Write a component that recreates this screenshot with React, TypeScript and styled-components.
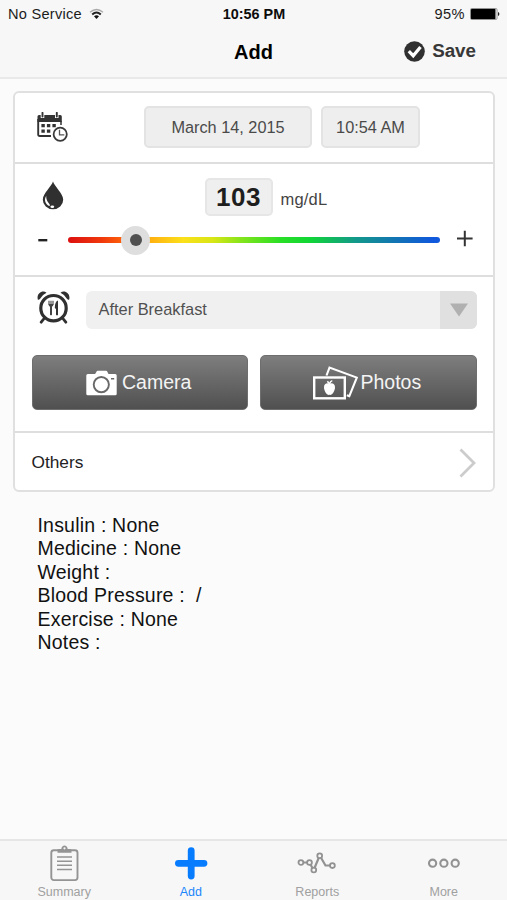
import React from 'react';
import styled, { createGlobalStyle } from 'styled-components';

const GlobalStyle = createGlobalStyle`
  * { box-sizing: border-box; }
  body {
    margin: 0;
    background: #fbfbfb;
    font-family: "Liberation Sans", Arial, Helvetica, sans-serif;
    color: #1c1c1c;
  }
  button { font-family: inherit; }
  svg { display: block; flex: none; }
`;

const Screen = styled.div`
  width: 507px;
  height: 900px;
  display: flex;
  flex-direction: column;
  overflow: hidden;
`;

const Header = styled.header`
  height: 79px;
  flex: none;
  background: #f7f7f7;
  border-bottom: 2px solid #e9e9e9;
`;

const StatusBar = styled.div`
  display: grid;
  grid-template-columns: 1fr auto 1fr;
  height: 28px;
  padding: 0 7px 0 8px;
  font-size: 14.6px;
  line-height: 28px;
`;

const StatusGroup = styled.div<{ $end?: boolean }>`
  display: flex;
  align-items: center;
  gap: ${(p) => (p.$end ? 5 : 7)}px;
  justify-content: ${(p) => (p.$end ? 'flex-end' : 'flex-start')};
  letter-spacing: ${(p) => (p.$end ? '0.4px' : '0.25px')};
`;

const Clock = styled.div`
  font-size: 14.4px;
  font-weight: 700;
  color: #0c0c0c;
`;

const TitleBar = styled.div`
  display: grid;
  grid-template-columns: 1fr auto 1fr;
  height: 49px;
`;

const Title = styled.h1`
  grid-column: 2;
  margin: 0;
  font-size: 20px;
  line-height: 49px;
  font-weight: 700;
  color: #000;
`;

const SaveButton = styled.button`
  grid-column: 3;
  justify-self: end;
  display: flex;
  align-items: center;
  gap: 7px;
  height: 46px;
  padding: 0 31px 0 0;
  border: 0;
  background: none;
  font-size: 18.8px;
  font-weight: 700;
  color: #383838;
`;

const Card = styled.main`
  margin: 12px 12px 0 13px;
  height: 401px;
  flex: none;
  display: flex;
  flex-direction: column;
  background: #fff;
  border: 2px solid #e0e0e0;
  border-radius: 6px;
`;

const Section = styled.section<{ $height: number }>`
  height: ${(p) => p.$height}px;
  flex: none;
  & + & { border-top: 2px solid #dedede; }
`;

const IconSlot = styled.div<{ $top: number }>`
  padding-top: ${(p) => p.$top}px;
`;

const DateRow = styled.div`
  display: flex;
  padding: 13px 0 0 21.5px;
`;

const Field = styled.button<{ $width: number }>`
  width: ${(p) => p.$width}px;
  height: 42px;
  padding: 0;
  border: 2px solid #e3e3e3;
  border-radius: 5px;
  background: #eee;
  font-size: 16.3px;
  color: #4a4a4a;
`;

const Fields = styled.div`
  display: flex;
  gap: 9px;
  margin-left: 75.5px;
`;

const ReadingRow = styled.div`
  display: flex;
  align-items: flex-start;
  padding: 14px 0 0 26.5px;
`;

const Reading = styled.div`
  width: 68px;
  height: 38px;
  margin-left: 141px;
  border: 2px solid #e6e6e6;
  border-radius: 5px;
  background: #efefef;
  text-align: center;
  font-size: 26px;
  line-height: 35px;
  font-weight: 700;
  letter-spacing: 0.5px;
  color: #1e1e1e;
`;

const Unit = styled.span`
  margin: 1px 0 0 8px;
  font-size: 16.5px;
  line-height: 41px;
  letter-spacing: 0.2px;
  color: #444;
`;

const SliderRow = styled.div`
  display: flex;
  align-items: center;
  height: 30px;
  margin-top: 5px;
  padding-left: 23px;
`;

const Track = styled.div`
  display: flex;
  align-items: center;
  width: 372px;
  height: 6px;
  margin: 0 16.5px 0 20px;
  padding-left: 53px;
  border-radius: 3px;
  background: linear-gradient(90deg, #dc1010 0%, #f0380c 9%, #ff6a0c 16%, #ffb010 22%, #fbe01a 31%, #d8e616 39%, #80e41c 47%, #2adf26 57%, #10d636 65%, #129a88 77%, #1274b4 88%, #1058dc 98%);
`;

const Knob = styled.div`
  display: grid;
  place-items: center;
  width: 29px;
  height: 29px;
  border-radius: 50%;
  background: #dedede;
  &::after {
    content: '';
    width: 12px;
    height: 12px;
    border-radius: 50%;
    background: #505050;
  }
`;

const MealRow = styled.div`
  display: flex;
  padding: 14px 0 0 22px;
`;

const Select = styled.div`
  display: flex;
  width: 391px;
  height: 38px;
  margin: 0 0 0 16px;
  border-radius: 6px;
  overflow: hidden;
  background: #f0f0f0;
  font-size: 16.4px;
  line-height: 37px;
  color: #505050;
`;

const SelectValue = styled.span`
  flex: 1;
  padding-left: 12.5px;
`;

const SelectArrow = styled.span`
  display: grid;
  place-items: center;
  width: 37px;
  height: 38px;
  background: #e0e0e0;
`;

const ButtonRow = styled.div`
  display: grid;
  grid-template-columns: 216px 217px;
  gap: 12.5px;
  padding: 26px 0 0 16.5px;
`;

const MediaButton = styled.button<{ $gap: number; $inset: number }>`
  display: flex;
  align-items: center;
  gap: ${(p) => p.$gap}px;
  height: 55px;
  padding: 0 0 0 ${(p) => p.$inset}px;
  border: 1px solid #6e6e6e;
  border-radius: 5px;
  background: linear-gradient(#7e7e7e, #505050);
  color: #f4f4f4;
  font-size: 19.5px;
`;

const MediaLabel = styled.span`
  margin-top: -1px;
`;

const OthersRow = styled.div`
  display: flex;
  justify-content: space-between;
  align-items: center;
  height: 58px;
  padding: 1px 17px 0 16.5px;
  font-size: 17.3px;
  color: #222;
`;

const Details = styled.ul`
  flex: 1;
  margin: 0;
  padding: 22px 0 0 37.5px;
  list-style: none;
  font-size: 19.5px;
  line-height: 23.4px;
  letter-spacing: 0.2px;
  white-space: pre;
  color: #111;
`;

const TabBar = styled.nav`
  display: grid;
  grid-template-columns: repeat(4, 1fr);
  height: 61px;
  flex: none;
  padding-left: 1px;
  border-top: 2px solid #e6e6e6;
  background: #f7f7f7;
`;

const Tab = styled.div<{ $active?: boolean }>`
  display: flex;
  flex-direction: column;
  align-items: center;
  font-size: 12.5px;
  line-height: 15px;
  color: ${(p) => (p.$active ? '#1a86fb' : '#a0a0a0')};
  & > svg { margin: 3px 0; }
`;

const WifiIcon = () => (
  <svg width="15" height="12" viewBox="0 0 15 12" fill="none">
    <path d="M1 4.2Q7.5 -1.2 14 4.2" stroke="#aaa" strokeWidth="1.3" />
    <path d="M3.2 6.4Q7.5 2.6 11.8 6.4" stroke="#222" strokeWidth="2" />
    <path d="M5 8.2Q7.5 6.2 10 8.2L7.5 11Z" fill="#111" />
  </svg>
);

const BatteryIcon = () => (
  <svg width="30" height="12" viewBox="0 0 30 12">
    <rect x=".5" y=".5" width="26.5" height="11" rx="1.2" fill="#fff" stroke="#777" strokeWidth=".8" />
    <rect x="1" y="1" width="24.5" height="10" rx=".6" fill="#000" />
    <path d="M28 4q1.4 .4 1.4 2t-1.4 2z" fill="#222" />
  </svg>
);

const CheckIcon = () => (
  <svg width="21" height="21" viewBox="0 0 21 21">
    <circle cx="10.5" cy="10.5" r="10.3" fill="#303030" />
    <path d="M4.8 10.2L9.2 14.7L16.5 6" fill="none" stroke="#fff" strokeWidth="3.3" />
  </svg>
);

const CalendarIcon = () => (
  <svg width="32" height="31" viewBox="0 0 32 31">
    <path d="M1.2 7V22.5Q1.2 24 2.8 24H14" fill="none" stroke="#333" strokeWidth="1.9" />
    <path d="M.5 10V4.5Q.5 3 2 3H3.7V6H7.3V3H18V6H21.5V3H23.3Q24.8 3 24.8 4.5V10Z" fill="#333" />
    <path d="M5.5 .8V4.5M19.8 .8V4.5" stroke="#333" strokeWidth="1.9" strokeLinecap="round" />
    <path d="M24 9V13" stroke="#333" strokeWidth="1.5" />
    <path d="M4.4 12h3.4v3.2H4.4zM9.9 12h3.4v3.2H9.9zM15.4 12h3.4v3.2h-3.4zM4.4 17.6h3.4v3.2H4.4zM9.9 17.6h3.4v3.2H9.9z" fill="#333" />
    <circle cx="23.2" cy="22.3" r="8" fill="#fff" />
    <circle cx="23.2" cy="22.3" r="6.6" fill="#fff" stroke="#3a3a3a" strokeWidth="1.8" />
    <path d="M22.5 17.8V22.8H27.3" fill="none" stroke="#555" strokeWidth="1.3" />
  </svg>
);

const DropIcon = () => (
  <svg width="22" height="29" viewBox="0 0 22 29">
    <path d="M11 .5C12.5 5.5 21.2 12.5 21.2 18.7A10.1 9.5 0 0 1 .8 18.7C.8 12.5 9.5 5.5 11 .5Z" fill="#303030" />
    <path d="M4.2 14.8Q1.6 19.5 4.5 23.1Q6 24.9 7.8 25Q8.2 23.8 7 22.4Q4 19.4 4.2 14.8Z" fill="#fff" />
    <ellipse cx="10.3" cy="25.8" rx="1.9" ry="1.2" fill="#fff" />
  </svg>
);

const AlarmIcon = () => (
  <svg width="33" height="33" viewBox="0 0 33 33">
    <path d="M.8 8.4C-.8 2.3 5.8-1.4 9.5 1.8Q5.1 3.7 2.9 8.1Q1.5 9.3 .8 8.4ZM32.2 8.4C33.8 2.3 27.2-1.4 23.5 1.8Q27.9 3.7 30.1 8.1Q31.5 9.3 32.2 8.4Z" fill="#303030" />
    <path d="M7.5 27L4.2 31.2M25.5 27L28.8 31.2" stroke="#303030" strokeWidth="2.8" strokeLinecap="round" />
    <circle cx="16.5" cy="17.2" r="12.7" fill="#fff" stroke="#303030" strokeWidth="3.2" />
    <path d="M12 9.8V13.7M14 9.8V13.7M16 9.8V13.7" stroke="#444" strokeWidth="1.1" />
    <path d="M11.5 13H16.5Q16.3 15.3 15 15.8V23.7Q14 25 13 23.7V15.8Q11.6 15.3 11.5 13Z" fill="#444" />
    <path d="M21 9.5V23.8Q20 25 19 23.8V18L17.8 17Q17.8 10.5 21 9.5Z" fill="#333" />
  </svg>
);

const CameraIcon = () => (
  <svg width="31" height="26" viewBox="0 0 31 26">
    <path d="M1.8 4.1H9.1L10.6 1.4Q10.9.8 11.6.8H20.2Q20.8.8 21.2 1.4L22.5 4.1H29.2Q30.7 4.1 30.7 5.6V23.8Q30.7 25.3 29.2 25.3H1.8Q.3 25.3.3 23.8V5.6Q.3 4.1 1.8 4.1Z" fill="#fff" />
    <circle cx="15.3" cy="14.6" r="7.6" fill="#fff" stroke="#686868" strokeWidth="1.9" />
    <rect x="25" y="8" width="3.2" height="1.5" fill="#666" />
  </svg>
);

const PhotosIcon = () => (
  <svg width="45" height="34" viewBox="0 0 45 34" fill="none">
    <path d="M13.5 9.5L16.5 1.6L43.8 11.6L36.3 30.2L33.8 29.2" stroke="#fff" strokeWidth="2.1" />
    <rect x="1.2" y="11.5" width="30.6" height="20.8" stroke="#fff" strokeWidth="2.4" />
    <path d="M16.5 18C18.2 16.4 22.2 17.3 22 21.5C21.9 25 19 29.7 16.5 28.8C14 29.7 11.1 25 11 21.5C10.8 17.3 14.8 16.4 16.5 18Z" fill="#fff" />
    <path d="M16.5 18L14.4 15.2M16.5 18Q17.3 15.2 19.3 14.6" stroke="#fff" strokeWidth="1.5" />
  </svg>
);

const ClipboardIcon = () => (
  <svg width="29" height="38" viewBox="0 0 29 38" fill="none" stroke="#949494">
    <rect x="1.3" y="6.3" width="26.2" height="29.8" rx="2.5" strokeWidth="1.9" />
    <path d="M7.5 8.8V6Q7.5 5 9 5H11.3C11.6 .2 17.4 .2 17.7 5H20Q21.5 5 21.5 6V8.8Z" fill="#949494" stroke="none" />
    <circle cx="14.5" cy="4.3" r="1.1" fill="#f7f7f7" stroke="none" />
    <path d="M7 13.1H22M7 17.2H22M7 21.3H22M7 25.4H22" strokeWidth="1.5" />
  </svg>
);

const PlusIcon = () => (
  <svg width="34" height="38" viewBox="0 0 34 38">
    <path d="M17.2 6.6V32M4.4 19.3H30" stroke="#087cff" strokeWidth="6.8" strokeLinecap="round" />
  </svg>
);

const ReportsIcon = () => (
  <svg width="40" height="38" viewBox="0 0 40 38" stroke="#929292" strokeWidth="1.8">
    <path d="M3.8 18.5H12.3L16.7 26L22.7 11.5L28.5 21.5H35.3" fill="none" strokeWidth="2.2" />
    <g fill="#f7f7f7">
      <circle cx="3.9" cy="18.5" r="2.4" />
      <circle cx="12.5" cy="18.5" r="2.4" />
      <circle cx="16.8" cy="26" r="2.4" />
      <circle cx="22.7" cy="11.7" r="2.4" />
      <circle cx="35.4" cy="21.6" r="2.4" />
    </g>
  </svg>
);

const MoreIcon = () => (
  <svg width="34" height="38" viewBox="0 0 34 38" fill="none" stroke="#929292" strokeWidth="2.1">
    <circle cx="5.6" cy="19.2" r="3.6" />
    <circle cx="16.9" cy="19.2" r="3.6" />
    <circle cx="28.2" cy="19.2" r="3.6" />
  </svg>
);

const details = [
  'Insulin : None',
  'Medicine : None',
  'Weight :',
  'Blood Pressure :  /',
  'Exercise : None',
  'Notes :',
];

const tabs = [
  { label: 'Summary', Icon: ClipboardIcon },
  { label: 'Add', Icon: PlusIcon, active: true },
  { label: 'Reports', Icon: ReportsIcon },
  { label: 'More', Icon: MoreIcon },
];

export default function App() {
  return (
    <Screen>
      <GlobalStyle />
      <Header>
        <StatusBar>
          <StatusGroup>No Service<WifiIcon /></StatusGroup>
          <Clock>10:56 PM</Clock>
          <StatusGroup $end>95%<BatteryIcon /></StatusGroup>
        </StatusBar>
        <TitleBar>
          <Title>Add</Title>
          <SaveButton><CheckIcon />Save</SaveButton>
        </TitleBar>
      </Header>

      <Card>
        <Section $height={69}>
          <DateRow>
            <IconSlot $top={6}><CalendarIcon /></IconSlot>
            <Fields>
              <Field $width={168}>March 14, 2015</Field>
              <Field $width={99}>10:54 AM</Field>
            </Fields>
          </DateRow>
        </Section>

        <Section $height={113}>
          <ReadingRow>
            <IconSlot $top={3}><DropIcon /></IconSlot>
            <Reading>103</Reading>
            <Unit>mg/dL</Unit>
          </ReadingRow>
          <SliderRow>
            <svg width="10" height="20" viewBox="0 0 10 20">
              <path d="M.3 10.2H9.3" stroke="#222" strokeWidth="2.4" />
            </svg>
            <Track><Knob /></Track>
            <svg width="16" height="20" viewBox="0 0 16 20">
              <path d="M0 8.5H15.6M7.8 .7V16.3" stroke="#333" strokeWidth="2" />
            </svg>
          </SliderRow>
        </Section>

        <Section $height={156}>
          <MealRow>
            <IconSlot $top={0}><AlarmIcon /></IconSlot>
            <Select>
              <SelectValue>After Breakfast</SelectValue>
              <SelectArrow>
                <svg width="18" height="14" viewBox="0 0 18 14">
                  <path d="M0 .5H18L9 13.5Z" fill="#b0b0b0" />
                </svg>
              </SelectArrow>
            </Select>
          </MealRow>
          <ButtonRow>
            <MediaButton $gap={5} $inset={53.5}><CameraIcon /><MediaLabel>Camera</MediaLabel></MediaButton>
            <MediaButton $gap={2.5} $inset={52}><PhotosIcon /><MediaLabel>Photos</MediaLabel></MediaButton>
          </ButtonRow>
        </Section>

        <Section $height={59}>
          <OthersRow>
            Others
            <svg width="17" height="30" viewBox="0 0 17 30">
              <path d="M1.5 1.5L15 15L1.5 28.5" fill="none" stroke="#ccc" strokeWidth="2.8" />
            </svg>
          </OthersRow>
        </Section>
      </Card>

      <Details>
        {details.map((line) => <li key={line}>{line}</li>)}
      </Details>

      <TabBar>
        {tabs.map(({ label, Icon, active }) => (
          <Tab key={label} $active={active}><Icon />{label}</Tab>
        ))}
      </TabBar>
    </Screen>
  );
}
